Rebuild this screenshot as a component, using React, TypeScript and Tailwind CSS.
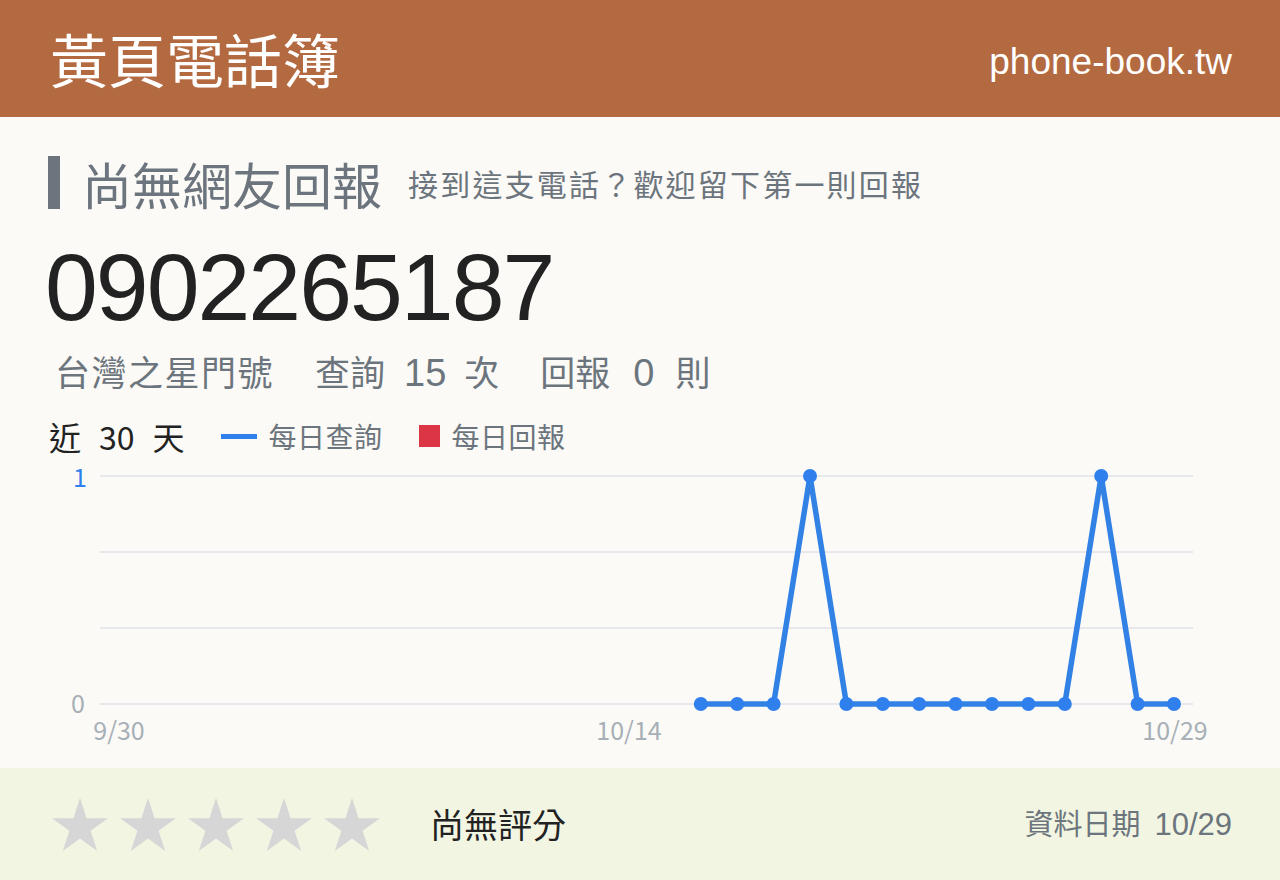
import React from 'react';

const cjk = { fontFamily: '"Noto Sans CJK TC", "Noto Sans", sans-serif' };
const arial = { fontFamily: '"Liberation Sans", Arial, "Noto Sans CJK TC", sans-serif' };

// 近 30 天的每日查詢次數 (9/30 ~ 10/29), null = 無資料
const daily: (number | null)[] = [
  null, null, null, null, null, null, null, null, null, null,
  null, null, null, null, null, null, 0, 0, 0, 1,
  0, 0, 0, 0, 0, 0, 0, 1, 0, 0,
];

function Chart() {
  const x0 = 118.4;
  const step = 36.4;
  const top = 26;
  const bottom = 254;
  const pts = daily
    .map((v, i) => (v === null ? null : { x: x0 + i * step, y: bottom - v * (bottom - top) }))
    .filter((p): p is { x: number; y: number } => p !== null);
  const grid = [26, 102, 178, 254];

  return (
    <svg width="1280" height="300" viewBox="0 0 1280 300" className="block">
      {grid.map((y) => (
        <line key={y} x1="100" x2="1193" y1={y} y2={y} stroke="#e6e8ec" strokeWidth="2" />
      ))}
      <text x="87" y="37" textAnchor="end" fill="#2f80ed" fontSize="25" style={cjk}>1</text>
      <text x="85" y="263" textAnchor="end" fill="#a7afb7" fontSize="25" style={cjk}>0</text>
      <text x="119" y="290" textAnchor="middle" fill="#a7afb7" fontSize="25" style={cjk}>9/30</text>
      <text x="629" y="290" textAnchor="middle" fill="#a7afb7" fontSize="25" style={cjk}>10/14</text>
      <text x="1175" y="290" textAnchor="middle" fill="#a7afb7" fontSize="25" style={cjk}>10/29</text>
      <polyline
        points={pts.map((p) => `${p.x},${p.y}`).join(' ')}
        fill="none"
        stroke="#3282e6"
        strokeWidth="5.5"
        strokeLinejoin="round"
      />
      {pts.map((p, i) => (
        <circle key={i} cx={p.x} cy={p.y} r="7" fill="#2f80ed" />
      ))}
    </svg>
  );
}

function Star() {
  return (
    <svg width="56" height="53" viewBox="0 0 56 53">
      <polygon
        points="28,0 34.6,20.2 55.9,20.2 38.6,32.8 45.2,53 28,40.5 10.8,53 17.4,32.8 0.1,20.2 21.4,20.2"
        fill="#d6d6d6"
      />
    </svg>
  );
}

export default function App() {
  return (
    <div className="w-[1280px] h-[880px] flex flex-col bg-[#fbfaf6] overflow-hidden">
      {/* header */}
      <div className="h-[117px] shrink-0 bg-[#b46a40] flex items-center justify-between pl-[50px] pr-[48px]">
        <div className="text-white text-[58px] leading-none pb-[2px]" style={cjk}>黃頁電話簿</div>
        <div className="text-white text-[37px] leading-none pt-[5px]" style={arial}>phone-book.tw</div>
      </div>

      {/* main */}
      <div className="flex-1 flex flex-col pl-[48px] pt-[39px]">
        <div className="flex items-center">
          <div className="w-[12px] h-[53px] bg-[#6c757d]" />
          <div className="ml-[22px] text-[50px] leading-none text-[#6c757d]" style={cjk}>尚無網友回報</div>
          <div className="ml-[26px] text-[30px] leading-none text-[#6c757d] tracking-[2.2px]" style={cjk}>
            接到這支電話？歡迎留下第一則回報
          </div>
        </div>

        <div className="mt-[31px] text-[95px] leading-none text-[#222] tracking-[-2px] ml-[-3px]" style={arial}>
          0902265187
        </div>

        <div className="mt-[18px] ml-[7px] flex items-baseline text-[35px] leading-none text-[#6c757d]" style={cjk}>
          <span className="tracking-[1.5px]">台灣之星門號</span>
          <span className="ml-[41px]">查詢</span>
          <span className="ml-[19px] text-[38px]" style={arial}>15</span>
          <span className="ml-[18px]">次</span>
          <span className="ml-[41px]">回報</span>
          <span className="ml-[23px] text-[38px]" style={arial}>0</span>
          <span className="ml-[21px]">則</span>
        </div>

        <div className="mt-[28px] ml-[1px] flex items-center text-[#222]" style={cjk}>
          <span className="text-[32px] leading-none">近</span>
          <span className="ml-[18px] text-[32px] leading-none">30</span>
          <span className="ml-[18px] text-[32px] leading-none">天</span>
          <span className="ml-[36px] w-[36px] h-[5px] bg-[#2f80ed]" />
          <span className="ml-[12px] text-[28px] leading-none text-[#6c757d] tracking-[0.5px]">每日查詢</span>
          <span className="ml-[36px] w-[21px] h-[22px] bg-[#dc3545]" />
          <span className="ml-[12px] text-[28px] leading-none text-[#6c757d] tracking-[0.5px]">每日回報</span>
        </div>

        <div className="-ml-[48px] -mt-[2px]">
          <Chart />
        </div>
      </div>

      {/* footer */}
      <div className="h-[112px] shrink-0 bg-[#f2f5e2] flex items-center pl-[52px] pr-[48px]">
        <div className="flex gap-[12px] pt-[1px]">
          <Star />
          <Star />
          <Star />
          <Star />
          <Star />
        </div>
        <div className="ml-[50px] text-[34px] leading-none text-[#222]" style={cjk}>尚無評分</div>
        <div className="ml-auto flex items-baseline text-[#6c757d]">
          <span className="text-[29px] leading-none" style={cjk}>資料日期</span>
          <span className="ml-[14px] text-[31px] leading-none" style={arial}>10/29</span>
        </div>
      </div>
    </div>
  );
}
